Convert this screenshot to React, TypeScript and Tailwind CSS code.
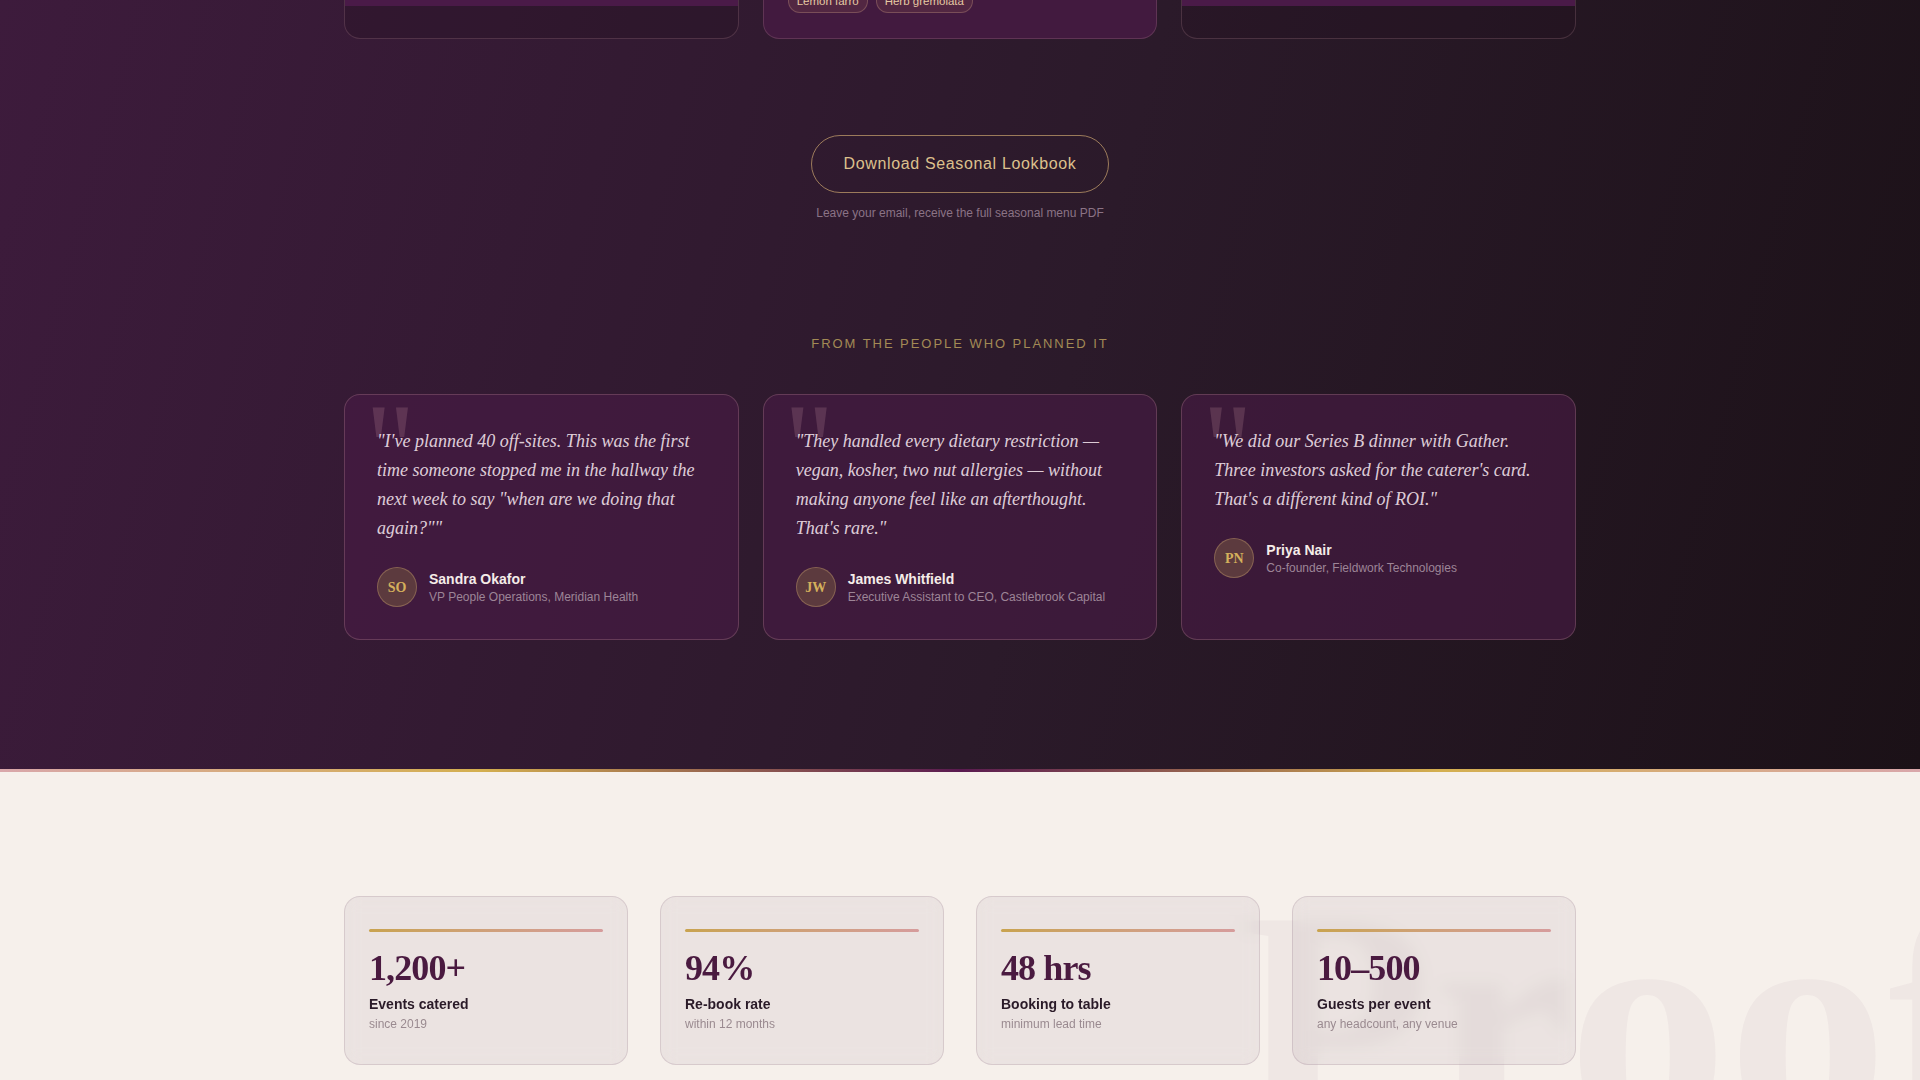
import React from "react";

const testimonials = [
  {
    quote:
      '"I\'ve planned 40 off-sites. This was the first time someone stopped me in the hallway the next week to say "when are we doing that again?""',
    name: "Sandra Okafor",
    role: "VP People Operations, Meridian Health",
    initials: "SO",
  },
  {
    quote:
      '"They handled every dietary restriction — vegan, kosher, two nut allergies — without making anyone feel like an afterthought. That\'s rare."',
    name: "James Whitfield",
    role: "Executive Assistant to CEO, Castlebrook Capital",
    initials: "JW",
  },
  {
    quote:
      '"We did our Series B dinner with Gather. Three investors asked for the caterer\'s card. That\'s a different kind of ROI."',
    name: "Priya Nair",
    role: "Co-founder, Fieldwork Technologies",
    initials: "PN",
  },
];

const stats = [
  { value: "1,200+", label: "Events catered", note: "since 2019" },
  { value: "94%", label: "Re-book rate", note: "within 12 months" },
  { value: "48 hrs", label: "Booking to table", note: "minimum lead time" },
  { value: "10–500", label: "Guests per event", note: "any headcount, any venue" },
];

function MenuCardTail({ featured }: { featured?: boolean }) {
  if (featured) {
    return (
      <div className="h-[39px] overflow-hidden rounded-b-2xl border border-t-0 border-[#d4a0a8]/20 bg-[#421a3f] px-6">
        <div className="-mt-[11px] flex gap-2">
          {["Lemon farro", "Herb gremolata"].map((tag) => (
            <span
              key={tag}
              className="rounded-full border border-[#d4aa8c]/30 bg-[#5a2e44]/70 px-2 py-[3px] text-[11.5px] leading-[16px] text-[#e6c9a3]"
            >
              {tag}
            </span>
          ))}
        </div>
      </div>
    );
  }
  return (
    <div className="flex h-[39px] flex-col overflow-hidden rounded-b-2xl border border-t-0 border-[#d4a0a8]/20 bg-[#241222]/30">
      <div className="h-[6px] bg-[#4a1a48]" />
    </div>
  );
}

export default function App() {
  return (
    <div className="min-h-screen font-['Liberation_Sans',Arial,sans-serif]">
      {/* Menu tail + testimonials */}
      <section className="bg-[linear-gradient(105deg,#3d1b3c_0%,#331a32_30%,#2b1a2a_55%,#1b1117_100%)] pb-[129px]">
        <div className="mx-auto max-w-7xl px-6">
          <div className="grid grid-cols-3 gap-6">
            <MenuCardTail />
            <MenuCardTail featured />
            <MenuCardTail />
          </div>

          <div className="mt-[96px] flex flex-col items-center">
            <button className="h-[58px] rounded-full border border-[#b89466]/80 px-8 text-[16px] tracking-[0.04em] text-[#dcc08c]">
              Download Seasonal Lookbook
            </button>
            <p className="mt-3 text-[12px] leading-4 text-[#8b7386]">
              Leave your email, receive the full seasonal menu PDF
            </p>
          </div>

          <h2 className="mt-[113px] text-center text-[13px] leading-5 tracking-[0.15em] text-[#a38a55]">
            FROM THE PEOPLE WHO PLANNED IT
          </h2>

          <div className="mt-10 grid grid-cols-3 gap-6">
            {testimonials.map((t) => (
              <div
                key={t.name}
                className="relative overflow-hidden rounded-2xl border border-[#d4a0a8]/25 bg-[#4a1a46]/60 p-8"
              >
                <span className="pointer-events-none absolute -top-2 left-5 font-['Liberation_Serif',Georgia,serif] text-[124px] leading-none text-[#d4a0a8]/20">
                  "
                </span>
                <p className="relative font-['Liberation_Serif',Georgia,serif] text-[18px] italic leading-[29px] text-[#f3e4ec]/90">
                  {t.quote}
                </p>
                <div className="relative mt-6 flex items-center gap-3">
                  <div className="flex h-10 w-10 items-center justify-center rounded-full border border-[#c9a070]/40 bg-[#5c3a3e] font-['Liberation_Serif',Georgia,serif] text-[14px] font-bold text-[#d4b05c]">
                    {t.initials}
                  </div>
                  <div>
                    <div className="text-[14px] font-bold leading-5 text-[#f5ece8]">{t.name}</div>
                    <div className="text-[12px] leading-4 text-[#9d8597]">{t.role}</div>
                  </div>
                </div>
              </div>
            ))}
          </div>
        </div>
      </section>

      <div className="h-[3px] bg-[linear-gradient(90deg,#d9a7ab_0%,#d4af4f_25%,#5a1a50_50%,#d4af4f_75%,#d9a7ab_100%)]" />

      {/* Stats */}
      <section className="relative overflow-hidden bg-[#f6f0eb] pb-24 pt-[124px]">
        <span className="pointer-events-none absolute left-[1236px] top-[90px] select-none whitespace-nowrap font-['Liberation_Serif',Georgia,serif] text-[320px] font-bold leading-none text-[#4a1a40]/[0.04]">
          Proof
        </span>
        <div className="relative mx-auto grid max-w-7xl grid-cols-4 gap-8 px-6">
          {stats.map((s) => (
            <div
              key={s.label}
              className="rounded-2xl border border-[#4a1a40]/[0.12] bg-[#4a1a40]/[0.06] px-6 pb-8 pt-8 backdrop-blur-sm"
            >
              <div className="h-[3px] rounded-full bg-gradient-to-r from-[#c9a34f] to-[#d69c9c]" />
              <div className="mt-[18px] font-['Liberation_Serif',Georgia,serif] text-[36px] font-bold leading-9 tracking-tight text-[#4a1a40]">
                {s.value}
              </div>
              <div className="mt-2 text-[14px] font-bold leading-5 text-[#2a1a28]">{s.label}</div>
              <div className="mt-0.5 text-[12px] leading-4 text-[#9a8a90]">{s.note}</div>
            </div>
          ))}
        </div>
      </section>
    </div>
  );
}
